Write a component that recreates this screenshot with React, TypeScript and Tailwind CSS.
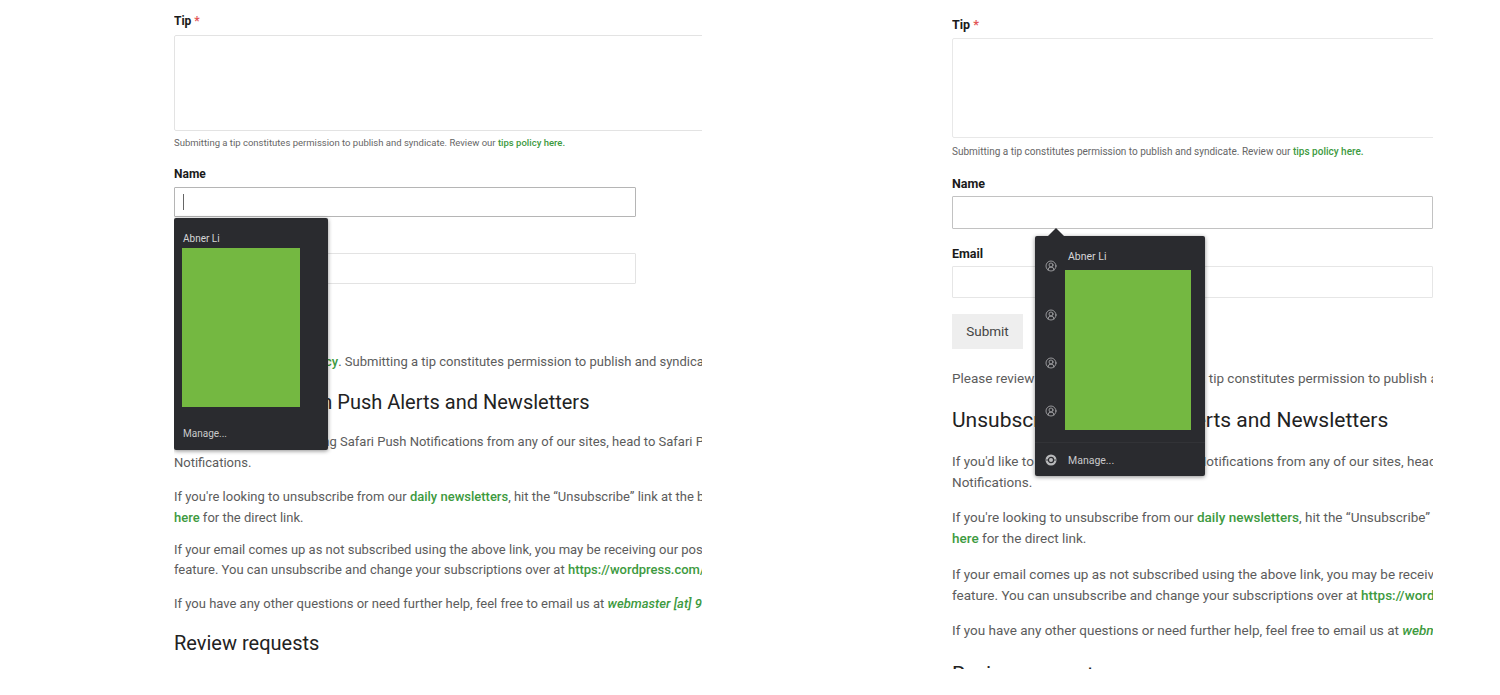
import type { ReactNode } from 'react';
import { CircleUserRound } from 'lucide-react';

const A = ({ children }: { children: ReactNode }) => (
  <a className="text-[#3d9a40] font-medium">{children}</a>
);

const ManageIcon = () => (
  <svg width="12" height="12" viewBox="0 0 12 12">
    <circle cx="6" cy="6" r="5.5" fill="#b9babc" />
    <circle cx="6" cy="6" r="2.6" fill="none" stroke="#2a2b2f" strokeWidth="1.2" />
    <path d="M1 6h2M9 6h2" stroke="#2a2b2f" strokeWidth="0.8" />
  </svg>
);

const Line = ({ children }: { children: ReactNode }) => (
  <span className="block whitespace-nowrap">{children}</span>
);

export default function App() {
  return (
    <div className="flex w-[1500px] h-[695px] bg-white overflow-hidden font-['Roboto',sans-serif] pl-[174px] gap-[250px]">
      {/* first screenshot */}
      <div className="relative w-[528px] h-[695px] overflow-hidden pt-[13px] shrink-0">
        <div className="text-[12px] leading-4 font-bold text-[#1a1a1a]">
          Tip <span className="text-[#e25555]">*</span>
        </div>
        <div className="w-[600px] h-[96px] mt-[6px] border border-[#e3e3e3] rounded-[2px]" />
        <p className="mt-[5px] text-[9.5px] leading-[14px] text-[#666] whitespace-nowrap">
          Submitting a tip constitutes permission to publish and syndicate. Review our <A>tips policy here.</A>
        </p>
        <div className="mt-[16px] text-[12px] leading-4 font-bold text-[#1a1a1a]">Name</div>
        <div className="flex items-center w-[462px] h-[30px] mt-[5px] border border-[#b5b5b5] rounded-[1px] pl-2">
          <span className="w-px h-[16px] bg-[#666]" />
        </div>
        <div className="mt-[15px] text-[12px] leading-4 font-bold text-[#1a1a1a]">Email</div>
        <div className="w-[462px] h-[31px] mt-[5px] border border-[#e3e3e3] rounded-[1px]" />
        <div className="mt-[16px] h-[35px]" />
        <p className="mt-[17px] text-[13px] leading-5 text-[#5c5c5c] whitespace-nowrap">
          Please review our <A>tips policy</A>. Submitting a tip constitutes permission to publish and syndicate.
        </p>
        <h2 className="mt-[17px] text-[20px] leading-[26px] font-normal text-[#222] whitespace-nowrap">
          Unsubscribe from Push Alerts and Newsletters
        </h2>
        <p className="mt-[16px] text-[13px] leading-[21px] text-[#5c5c5c]">
          <Line>If you'd like to stop receiving Safari Push Notifications from any of our sites, head to Safari Preferences</Line>
          <Line>Notifications.</Line>
        </p>
        <p className="mt-[13px] text-[13px] leading-[21px] text-[#5c5c5c]">
          <Line>If you're looking to unsubscribe from our <A>daily newsletters</A>, hit the “Unsubscribe” link at the bottom of any email</Line>
          <Line><A>here</A> for the direct link.</Line>
        </p>
        <p className="mt-[12px] text-[13px] leading-[20px] text-[#5c5c5c]">
          <Line>If your email comes up as not subscribed using the above link, you may be receiving our posts via the follow</Line>
          <Line>feature. You can unsubscribe and change your subscriptions over at <A>https://wordpress.com/following</A></Line>
        </p>
        <p className="mt-[14px] text-[13px] leading-[20px] text-[#5c5c5c] whitespace-nowrap">
          If you have any other questions or need further help, feel free to email us at <A><em>webmaster [at] 9to5mac.com</em></A>
        </p>
        <h2 className="mt-[16px] text-[20px] leading-[26px] font-normal text-[#222]">Review requests</h2>

        <div className="absolute left-0 top-[218px] w-[154px] h-[232px] bg-[#2a2b2f] rounded-[2px] shadow-[0_1px_4px_rgba(0,0,0,0.45)] pl-2">
          <div className="pt-[15px] pl-px text-[10px] leading-3 text-[#d6d6d8]">Abner Li</div>
          <div className="w-[118px] h-[159px] mt-[3px] bg-[#74b841]" />
          <div className="mt-[21px] pl-px text-[10px] leading-3 text-[#c9c9cb]">Manage...</div>
        </div>
      </div>

      {/* second screenshot */}
      <div className="relative w-[481px] h-[669px] overflow-hidden pt-[17px] shrink-0">
        <div className="text-[12.5px] leading-4 font-bold text-[#1a1a1a]">
          Tip <span className="text-[#e25555]">*</span>
        </div>
        <div className="w-[600px] h-[100px] mt-[5px] border border-[#e8e8e8] rounded-[2px]" />
        <p className="mt-[7px] text-[10px] leading-[14px] text-[#666] whitespace-nowrap">
          Submitting a tip constitutes permission to publish and syndicate. Review our <A>tips policy here.</A>
        </p>
        <div className="mt-[17px] text-[12.5px] leading-4 font-bold text-[#1a1a1a]">Name</div>
        <div className="w-full h-[33px] mt-[4px] border border-[#c2c2c2] rounded-[1px]" />
        <div className="mt-[17px] text-[12.5px] leading-4 font-bold text-[#1a1a1a]">Email</div>
        <div className="w-full h-[32px] mt-[4px] border border-[#e6e6e6] rounded-[1px]" />
        <button className="block w-[71px] h-[35px] mt-[16px] bg-[#eeeeee] text-[13.5px] text-[#444]">Submit</button>
        <p className="mt-[19px] text-[13.5px] leading-5 text-[#5c5c5c] whitespace-nowrap">
          Please review our <A>tips policy</A>. Submitting a tip constitutes permission to publish and syndicate.
        </p>
        <h2 className="mt-[19px] text-[21px] leading-[26px] font-normal text-[#222] whitespace-nowrap">
          Unsubscribe from Push Alerts and Newsletters
        </h2>
        <p className="mt-[18px] text-[13.5px] leading-[21px] text-[#5c5c5c]">
          <Line>If you'd like to stop receiving Safari Push Notifications from any of our sites, head to Safari Preferences</Line>
          <Line>Notifications.</Line>
        </p>
        <p className="mt-[14px] text-[13.5px] leading-[21px] text-[#5c5c5c]">
          <Line>If you're looking to unsubscribe from our <A>daily newsletters</A>, hit the “Unsubscribe” link at the bottom of any email</Line>
          <Line><A>here</A> for the direct link.</Line>
        </p>
        <p className="mt-[15px] text-[13.5px] leading-[21px] text-[#5c5c5c]">
          <Line>If your email comes up as not subscribed using the above link, you may be receiving our posts via the follow</Line>
          <Line>feature. You can unsubscribe and change your subscriptions over at <A>https://wordpress.com/following</A></Line>
        </p>
        <p className="mt-[14px] text-[13.5px] leading-[21px] text-[#5c5c5c] whitespace-nowrap">
          If you have any other questions or need further help, feel free to email us at <A><em>webmaster [at] 9to5mac.com</em></A>
        </p>
        <h2 className="mt-[20px] text-[21px] leading-[26px] font-normal text-[#222]">Review requests</h2>

        <div className="absolute left-[83px] top-[236px] w-[170px] h-[240px] bg-[#2a2b2f] rounded-[2px] shadow-[0_1px_4px_rgba(0,0,0,0.45)] flex">
          <div className="absolute left-[13px] -top-[8px] w-0 h-0 border-x-[8px] border-x-transparent border-b-[8px] border-b-[#2a2b2f]" />
          <div className="w-[30px] flex flex-col items-center pt-[24px] pl-[2px] text-[#b9babc]">
            <CircleUserRound size={12} strokeWidth={1.5} />
            <CircleUserRound size={12} strokeWidth={1.5} className="mt-[37px]" />
            <CircleUserRound size={12} strokeWidth={1.5} className="mt-[36px]" />
            <CircleUserRound size={12} strokeWidth={1.5} className="mt-[36px]" />
            <div className="mt-[37px]"><ManageIcon /></div>
          </div>
          <div className="flex-1">
            <div className="pt-[15px] pl-[3px] text-[10.5px] leading-3 text-[#d6d6d8]">Abner Li</div>
            <div className="w-[126px] h-[160px] mt-[7px] bg-[#74b841]" />
            <div className="mt-[25px] pl-[3px] text-[10.5px] leading-3 text-[#c9c9cb]">Manage...</div>
          </div>
          <div className="absolute left-0 right-0 top-[206px] h-px bg-[#323337]" />
        </div>
      </div>
    </div>
  );
}
